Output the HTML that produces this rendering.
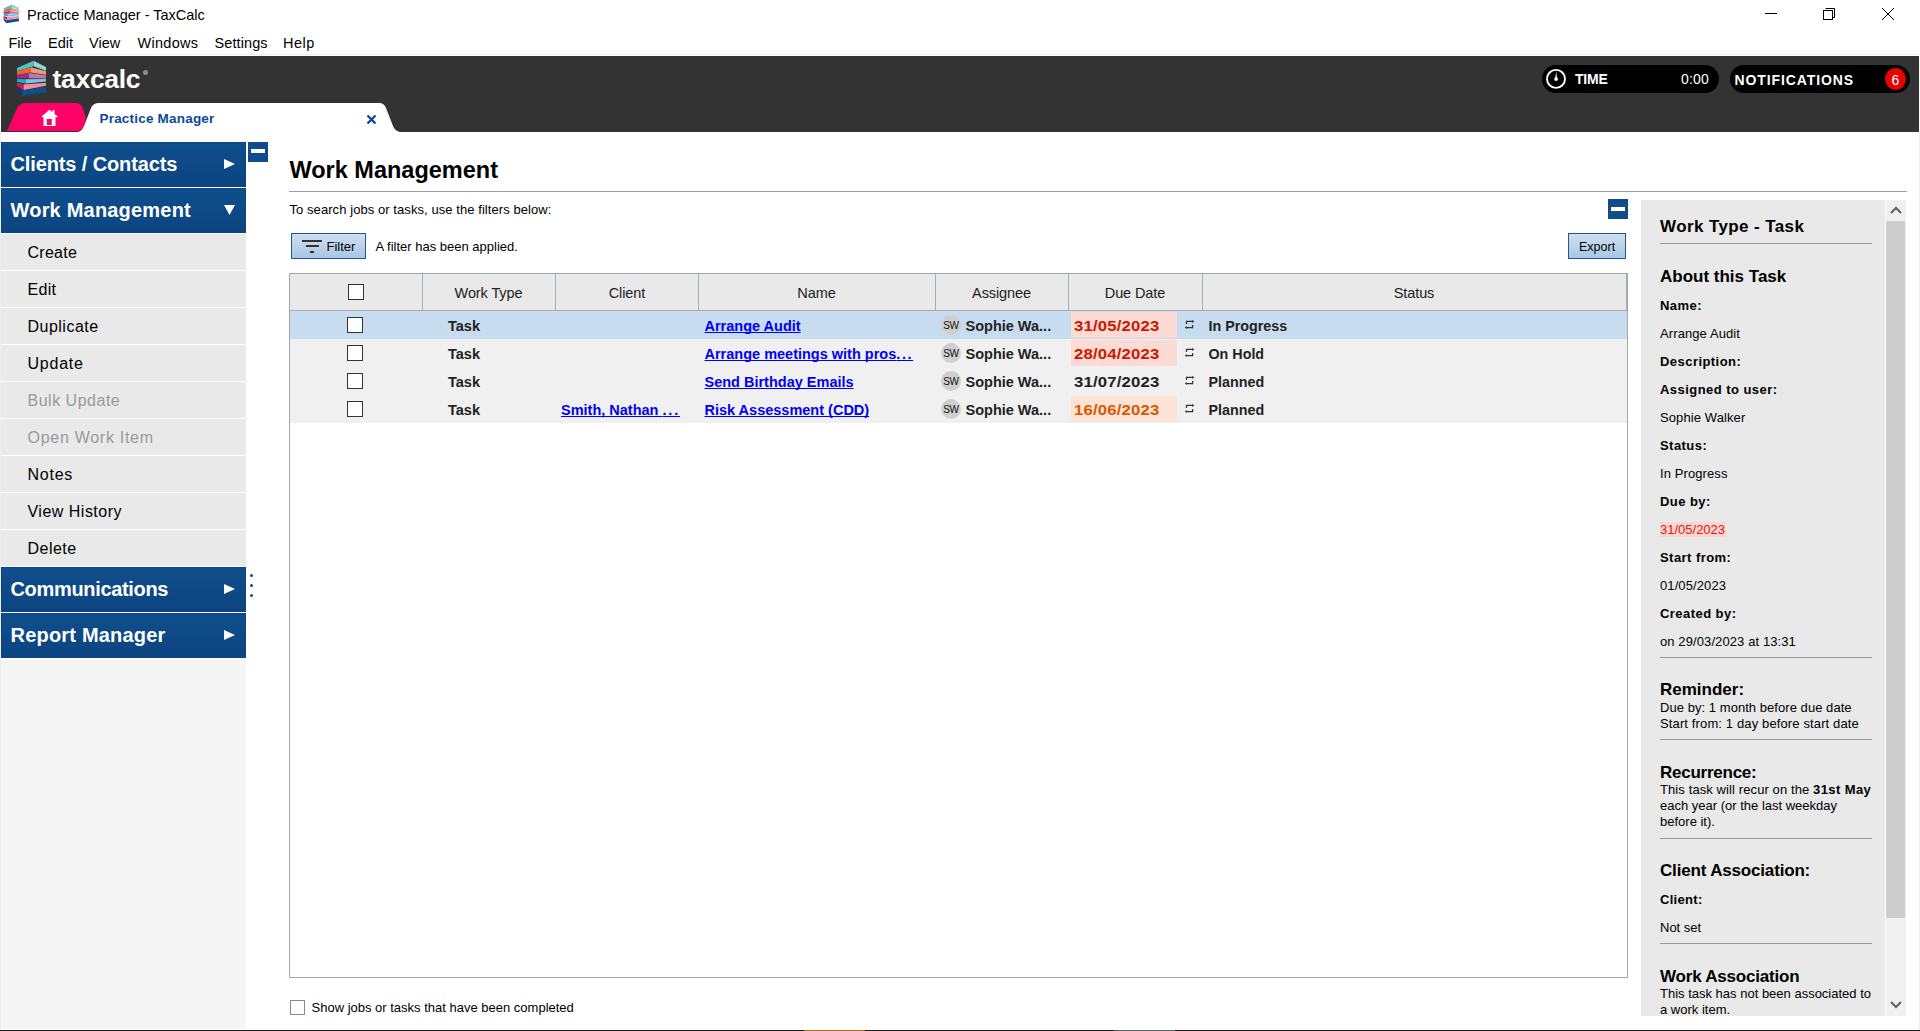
<!DOCTYPE html>
<html><head><meta charset="utf-8"><title>Practice Manager - TaxCalc</title>
<style>
html,body{margin:0;padding:0;width:1920px;height:1031px;overflow:hidden;background:#fff;font-family:"Liberation Sans", sans-serif;}
b{font-weight:700}
</style></head><body>
<div style="position:absolute;left:0px;top:0px;width:1920px;height:1031px;background:#fff"></div>
<svg style="position:absolute;left:2.3px;top:3px" width="19.08" height="21.20" viewBox="0 0 36 40"><polygon points="3,10 19.6,2.7 19.6,8.3 3,13.2" fill="#4cc5be"/><polygon points="19.6,2.7 32,9 32,12.8 19.6,8.3" fill="#8dd8d8"/><polygon points="3,13.5 16.7,9.2 16.7,14.5 3,17" fill="#f0622a"/><polygon points="16.7,9.2 32,13.2 32,16.7 16.7,14.5" fill="#f09a74"/><polygon points="3,17.3 14.8,15 14.8,20.2 3,20.2" fill="#a0288a"/><polygon points="14.8,15 32,17.3 32,20.4 14.8,20.2" fill="#b87ab4"/><polygon points="3,21 11.6,21.2 11.6,25.6 3,23.8" fill="#10b4d8"/><polygon points="11.6,21.2 32,21 32,23.4 11.6,25.6" fill="#78c8e4"/><polygon points="3,24.4 9.7,26.6 9.7,32 3,28.2" fill="#c8205a"/><polygon points="9.7,26.6 32,24.7 32,27.8 9.7,32" fill="#f58aa4"/><polygon points="3,28.4 7.8,32.6 7.8,38 3,31.5" fill="#1a3170"/><polygon points="7.8,32.6 32,29 32,34.5 7.8,38" fill="#0f4e8c"/></svg>
<div style="position:absolute;left:27px;top:7.73px;font-size:14.5px;line-height:14.5px;font-weight:400;color:#000;white-space:pre;">Practice Manager - TaxCalc</div>
<div style="position:absolute;left:1765px;top:13px;width:12px;height:1px;background:#000"></div>
<svg style="position:absolute;left:1820px;top:6px" width="18" height="18"><rect x="3.5" y="4.5" width="9" height="9" fill="none" stroke="#000" stroke-width="1"/><path d="M5.5 2.5 H14.5 V11.5 H12.5" fill="none" stroke="#000" stroke-width="1"/></svg>
<svg style="position:absolute;left:1880px;top:6px" width="16" height="16"><path d="M2 2 L14 14 M14 2 L2 14" stroke="#000" stroke-width="1"/></svg>
<div style="position:absolute;left:8.5px;top:35.53px;font-size:14.5px;line-height:14.5px;font-weight:400;color:#000;white-space:pre;letter-spacing:0px;">File</div>
<div style="position:absolute;left:48px;top:35.53px;font-size:14.5px;line-height:14.5px;font-weight:400;color:#000;white-space:pre;letter-spacing:0px;">Edit</div>
<div style="position:absolute;left:89px;top:35.53px;font-size:14.5px;line-height:14.5px;font-weight:400;color:#000;white-space:pre;letter-spacing:0px;">View</div>
<div style="position:absolute;left:137.5px;top:35.53px;font-size:14.5px;line-height:14.5px;font-weight:400;color:#000;white-space:pre;letter-spacing:0.3px;">Windows</div>
<div style="position:absolute;left:214.5px;top:35.53px;font-size:14.5px;line-height:14.5px;font-weight:400;color:#000;white-space:pre;letter-spacing:0.1px;">Settings</div>
<div style="position:absolute;left:283px;top:35.53px;font-size:14.5px;line-height:14.5px;font-weight:400;color:#000;white-space:pre;letter-spacing:0.5px;">Help</div>
<div style="position:absolute;left:0px;top:54px;width:1920px;height:1px;background:#f0f0f0"></div>
<div style="position:absolute;left:1px;top:56px;width:1918px;height:76px;background:#333333"></div>
<svg style="position:absolute;left:14px;top:58px" width="36.00" height="40.00" viewBox="0 0 36 40"><polygon points="3,10 19.6,2.7 19.6,8.3 3,13.2" fill="#4cc5be"/><polygon points="19.6,2.7 32,9 32,12.8 19.6,8.3" fill="#8dd8d8"/><polygon points="3,13.5 16.7,9.2 16.7,14.5 3,17" fill="#f0622a"/><polygon points="16.7,9.2 32,13.2 32,16.7 16.7,14.5" fill="#f09a74"/><polygon points="3,17.3 14.8,15 14.8,20.2 3,20.2" fill="#a0288a"/><polygon points="14.8,15 32,17.3 32,20.4 14.8,20.2" fill="#b87ab4"/><polygon points="3,21 11.6,21.2 11.6,25.6 3,23.8" fill="#10b4d8"/><polygon points="11.6,21.2 32,21 32,23.4 11.6,25.6" fill="#78c8e4"/><polygon points="3,24.4 9.7,26.6 9.7,32 3,28.2" fill="#c8205a"/><polygon points="9.7,26.6 32,24.7 32,27.8 9.7,32" fill="#f58aa4"/><polygon points="3,28.4 7.8,32.6 7.8,38 3,31.5" fill="#1a3170"/><polygon points="7.8,32.6 32,29 32,34.5 7.8,38" fill="#0f4e8c"/></svg>
<div style="position:absolute;left:52.5px;top:65.57px;font-size:26.5px;line-height:26.5px;font-weight:700;color:#fff;white-space:pre;letter-spacing:-0.3px;">taxcalc</div>
<div style="position:absolute;left:142.8px;top:69.8px;width:5.4px;height:5.4px;background:#8e8e8e;border-radius:50%"></div>
<svg style="position:absolute;left:0;top:100px" width="420" height="32" viewBox="0 100 420 32">
<path d="M7 131 L17 108 Q20 103 26 103 L76 103 Q81 103 83 109 L86 118 L84 126 Q82 131 77 131 Z" fill="#ff0066"/>
<path d="M78 132 Q82 131 84 126 L91 108 Q93 103 99 103 L379 103 Q384 103 386 108 L393 126 Q395 131 400 132 Z" fill="#fff" stroke="#333" stroke-width="0"/>
</svg>
<svg style="position:absolute;left:41px;top:109px" width="18" height="18" viewBox="0 0 18 18">
<path d="M0.5 7.5 L8.5 0.8 L11.5 3.3 L11.5 1 L13.5 1 L13.5 5 L16.8 7.5 L15.2 8.5 L14.5 8 L14.5 17 L2.5 17 L2.5 8 L1.8 8.5 Z" fill="#fff"/>
<rect x="5.8" y="10" width="5" height="6" fill="#ff0066"/>
</svg>
<div style="position:absolute;left:99.5px;top:112.37px;font-size:13.5px;line-height:13.5px;font-weight:700;color:#0b4a94;white-space:pre;letter-spacing:0.2px;">Practice Manager</div>
<svg style="position:absolute;left:366px;top:114px" width="11" height="11"><path d="M1.5 1.5 L9.5 9.5 M9.5 1.5 L1.5 9.5" stroke="#0b4a8c" stroke-width="2.4"/></svg>
<div style="position:absolute;left:1542px;top:65px;width:177px;height:28px;background:#000;border-radius:14px"></div>
<svg style="position:absolute;left:1545px;top:68px" width="22" height="22"><circle cx="11" cy="10.9" r="9.0" fill="none" stroke="#fff" stroke-width="1.9"/><path d="M11.2 3.3 L12.1 11 L10.1 11 Z" fill="#fff"/><circle cx="11.1" cy="11.1" r="1.9" fill="#fff"/></svg>
<div style="position:absolute;left:1575px;top:72.15px;font-size:14px;line-height:14px;font-weight:700;color:#fff;white-space:pre;letter-spacing:-0.2px;">TIME</div>
<div style="position:absolute;left:1681px;top:71.65px;font-size:14px;line-height:14px;font-weight:400;color:#fff;white-space:pre;letter-spacing:0.2px;">0:00</div>
<div style="position:absolute;left:1730px;top:65px;width:180px;height:28px;background:#000;border-radius:14px"></div>
<div style="position:absolute;left:1734.5px;top:73.15px;font-size:14px;line-height:14px;font-weight:700;color:#fff;white-space:pre;letter-spacing:0.9px;">NOTIFICATIONS</div>
<div style="position:absolute;left:1885px;top:68px;width:21px;height:22px;background:#e60000;border-radius:50%"></div>
<div style="position:absolute;left:1891.5px;top:73.15px;font-size:14px;line-height:14px;font-weight:400;color:#fff;white-space:pre;">6</div>
<div style="position:absolute;left:0px;top:659px;width:246px;height:370px;background:#f5f5f5"></div>
<div style="position:absolute;left:0px;top:132px;width:1px;height:899px;background:#eeeeee"></div>
<div style="position:absolute;left:1px;top:142px;width:245px;height:45px;background:linear-gradient(#0f4f8d,#0c4480);box-shadow:inset 0 0 0 1px #0c4580, inset 0 -1px 0 #093a6e"></div>
<div style="position:absolute;left:10.5px;top:154.07px;font-size:20px;line-height:20px;font-weight:700;color:#fff;white-space:pre;letter-spacing:-0.12px;">Clients / Contacts</div>
<svg style="position:absolute;left:224px;top:159px" width="12" height="12"><path d="M0 0 L11 5 L0 10 Z" fill="#fff"/></svg>
<div style="position:absolute;left:1px;top:188px;width:245px;height:45px;background:linear-gradient(#0f4f8d,#0c4480);box-shadow:inset 0 0 0 1px #0c4580, inset 0 -1px 0 #093a6e"></div>
<div style="position:absolute;left:10.5px;top:200.07px;font-size:20px;line-height:20px;font-weight:700;color:#fff;white-space:pre;letter-spacing:0.2px;">Work Management</div>
<svg style="position:absolute;left:224px;top:205px" width="12" height="12"><path d="M0 0 L11 0 L5.5 10 Z" fill="#fff"/></svg>
<div style="position:absolute;left:1px;top:234px;width:245px;height:36px;background:#e9e9e9"></div>
<div style="position:absolute;left:27.5px;top:244.96px;font-size:16px;line-height:16px;font-weight:400;color:#000;white-space:pre;letter-spacing:0.27px;">Create</div>
<div style="position:absolute;left:1px;top:271px;width:245px;height:36px;background:#e9e9e9"></div>
<div style="position:absolute;left:27.5px;top:281.96px;font-size:16px;line-height:16px;font-weight:400;color:#000;white-space:pre;letter-spacing:0.3px;">Edit</div>
<div style="position:absolute;left:1px;top:308px;width:245px;height:36px;background:#e9e9e9"></div>
<div style="position:absolute;left:27.5px;top:318.96px;font-size:16px;line-height:16px;font-weight:400;color:#000;white-space:pre;letter-spacing:0.49px;">Duplicate</div>
<div style="position:absolute;left:1px;top:345px;width:245px;height:36px;background:#e9e9e9"></div>
<div style="position:absolute;left:27.5px;top:355.96px;font-size:16px;line-height:16px;font-weight:400;color:#000;white-space:pre;letter-spacing:0.76px;">Update</div>
<div style="position:absolute;left:1px;top:382px;width:245px;height:36px;background:#e9e9e9"></div>
<div style="position:absolute;left:27.5px;top:392.96px;font-size:16px;line-height:16px;font-weight:400;color:#9a9a9a;white-space:pre;letter-spacing:0.51px;">Bulk Update</div>
<div style="position:absolute;left:1px;top:419px;width:245px;height:36px;background:#e9e9e9"></div>
<div style="position:absolute;left:27.5px;top:429.96px;font-size:16px;line-height:16px;font-weight:400;color:#9a9a9a;white-space:pre;letter-spacing:0.72px;">Open Work Item</div>
<div style="position:absolute;left:1px;top:456px;width:245px;height:36px;background:#e9e9e9"></div>
<div style="position:absolute;left:27.5px;top:466.96px;font-size:16px;line-height:16px;font-weight:400;color:#000;white-space:pre;letter-spacing:0.75px;">Notes</div>
<div style="position:absolute;left:1px;top:493px;width:245px;height:36px;background:#e9e9e9"></div>
<div style="position:absolute;left:27.5px;top:503.96px;font-size:16px;line-height:16px;font-weight:400;color:#000;white-space:pre;letter-spacing:0.49px;">View History</div>
<div style="position:absolute;left:1px;top:530px;width:245px;height:36px;background:#e9e9e9"></div>
<div style="position:absolute;left:27.5px;top:540.96px;font-size:16px;line-height:16px;font-weight:400;color:#000;white-space:pre;letter-spacing:0.47px;">Delete</div>
<div style="position:absolute;left:1px;top:567px;width:245px;height:45px;background:linear-gradient(#0f4f8d,#0c4480);box-shadow:inset 0 0 0 1px #0c4580, inset 0 -1px 0 #093a6e"></div>
<div style="position:absolute;left:10.5px;top:579.07px;font-size:20px;line-height:20px;font-weight:700;color:#fff;white-space:pre;letter-spacing:-0.33px;">Communications</div>
<svg style="position:absolute;left:224px;top:584px" width="12" height="12"><path d="M0 0 L11 5 L0 10 Z" fill="#fff"/></svg>
<div style="position:absolute;left:1px;top:613px;width:245px;height:45px;background:linear-gradient(#0f4f8d,#0c4480);box-shadow:inset 0 0 0 1px #0c4580, inset 0 -1px 0 #093a6e"></div>
<div style="position:absolute;left:10.5px;top:625.07px;font-size:20px;line-height:20px;font-weight:700;color:#fff;white-space:pre;letter-spacing:0.2px;">Report Manager</div>
<svg style="position:absolute;left:224px;top:630px" width="12" height="12"><path d="M0 0 L11 5 L0 10 Z" fill="#fff"/></svg>
<div style="position:absolute;left:248px;top:142px;width:20px;height:20px;background:#0e4c8a"></div>
<div style="position:absolute;left:251px;top:149px;width:14px;height:4px;background:#fff"></div>
<div style="position:absolute;left:250px;top:574px;width:3px;height:3px;background:#0e4c8a;border-radius:50%"></div>
<div style="position:absolute;left:250px;top:584px;width:3px;height:3px;background:#0e4c8a;border-radius:50%"></div>
<div style="position:absolute;left:250px;top:594px;width:3px;height:3px;background:#0e4c8a;border-radius:50%"></div>
<div style="position:absolute;left:289.5px;top:159.11px;font-size:23.5px;line-height:23.5px;font-weight:700;color:#000;white-space:pre;">Work Management</div>
<div style="position:absolute;left:289px;top:191px;width:1618px;height:1px;background:#a0a0a0"></div>
<div style="position:absolute;left:289.5px;top:202.80px;font-size:13px;line-height:13px;font-weight:400;color:#000;white-space:pre;letter-spacing:0.07px;">To search jobs or tasks, use the filters below:</div>
<div style="position:absolute;left:1608px;top:199px;width:20px;height:20px;background:#0e4c8a"></div>
<div style="position:absolute;left:1611px;top:207px;width:14px;height:4px;background:#fff"></div>
<div style="position:absolute;left:291px;top:233px;width:75px;height:26px;background:linear-gradient(#cfe0f1,#a9c6e2);border:1px solid #1d5796;box-sizing:border-box"></div>
<div style="position:absolute;left:302px;top:240px;width:20px;height:2px;background:#333"></div>
<div style="position:absolute;left:306px;top:245px;width:13px;height:2px;background:#333"></div>
<div style="position:absolute;left:310px;top:251px;width:4px;height:2px;background:#333"></div>
<div style="position:absolute;left:326.5px;top:239.60px;font-size:13px;line-height:13px;font-weight:400;color:#000;white-space:pre;">Filter</div>
<div style="position:absolute;left:375.5px;top:239.60px;font-size:13px;line-height:13px;font-weight:400;color:#000;white-space:pre;">A filter has been applied.</div>
<div style="position:absolute;left:1568px;top:233px;width:58px;height:26px;background:linear-gradient(#cfe0f1,#a9c6e2);border:1px solid #1d5796;box-sizing:border-box"></div>
<div style="position:absolute;left:1579px;top:240.72px;font-size:12.5px;line-height:12.5px;font-weight:400;color:#000;white-space:pre;">Export</div>
<div style="position:absolute;left:289px;top:273px;width:1339px;height:705px;background:#fff;border:1px solid #9ea8b0;box-sizing:border-box"></div>
<div style="position:absolute;left:290px;top:274px;width:1337px;height:36px;background:#e9e9e9"></div>
<div style="position:absolute;left:290px;top:310px;width:1337px;height:1px;background:#a5adb5"></div>
<div style="position:absolute;left:422px;top:274px;width:1px;height:36px;background:#a5adb5"></div>
<div style="position:absolute;left:555px;top:274px;width:1px;height:36px;background:#a5adb5"></div>
<div style="position:absolute;left:698px;top:274px;width:1px;height:36px;background:#a5adb5"></div>
<div style="position:absolute;left:935px;top:274px;width:1px;height:36px;background:#a5adb5"></div>
<div style="position:absolute;left:1068px;top:274px;width:1px;height:36px;background:#a5adb5"></div>
<div style="position:absolute;left:1202px;top:274px;width:1px;height:36px;background:#a5adb5"></div>
<div style="position:absolute;left:1626px;top:274px;width:1px;height:36px;background:#a5adb5"></div>
<div style="position:absolute;left:348px;top:284px;width:16px;height:16px;background:#fff;border:1.6px solid #333;box-sizing:border-box"></div>
<div style="position:absolute;left:188.5px;width:600px;text-align:center;top:285.73px;font-size:14.5px;line-height:14.5px;font-weight:400;color:#222;white-space:pre;letter-spacing:-0.1px;">Work Type</div>
<div style="position:absolute;left:327px;width:600px;text-align:center;top:285.73px;font-size:14.5px;line-height:14.5px;font-weight:400;color:#222;white-space:pre;letter-spacing:-0.1px;">Client</div>
<div style="position:absolute;left:516.5px;width:600px;text-align:center;top:285.73px;font-size:14.5px;line-height:14.5px;font-weight:400;color:#222;white-space:pre;letter-spacing:-0.1px;">Name</div>
<div style="position:absolute;left:701.5px;width:600px;text-align:center;top:285.73px;font-size:14.5px;line-height:14.5px;font-weight:400;color:#222;white-space:pre;letter-spacing:-0.1px;">Assignee</div>
<div style="position:absolute;left:835px;width:600px;text-align:center;top:285.73px;font-size:14.5px;line-height:14.5px;font-weight:400;color:#222;white-space:pre;letter-spacing:-0.1px;">Due Date</div>
<div style="position:absolute;left:1114px;width:600px;text-align:center;top:285.73px;font-size:14.5px;line-height:14.5px;font-weight:400;color:#222;white-space:pre;letter-spacing:-0.1px;">Status</div>
<div style="position:absolute;left:290px;top:311px;width:1337px;height:28px;background:#c7dcee"></div>
<div style="position:absolute;left:347px;top:317px;width:16px;height:16px;background:#fff;border:1.6px solid #333;box-sizing:border-box"></div>
<div style="position:absolute;left:448px;top:318.73px;font-size:14.5px;line-height:14.5px;font-weight:700;color:#222;white-space:pre;">Task</div>
<div style="position:absolute;left:704.5px;top:318.73px;font-size:14.5px;line-height:14.5px;font-weight:700;color:#0000f5;white-space:pre;text-decoration:underline;text-decoration-skip-ink:none">Arrange Audit</div>
<div style="position:absolute;left:941px;top:315px;width:20px;height:20px;background:#cfcfcf;border-radius:50%"></div>
<div style="position:absolute;left:650.8px;width:600px;text-align:center;top:321.24px;font-size:10px;line-height:10px;font-weight:400;color:#111;white-space:pre;letter-spacing:-0.6px;">SW</div>
<div style="position:absolute;left:965.5px;top:318.73px;font-size:14.5px;line-height:14.5px;font-weight:700;color:#222;white-space:pre;">Sophie Wa...</div>
<div style="position:absolute;left:1071px;top:312px;width:106px;height:26px;background:#fddbd5"></div>
<div style="position:absolute;left:1074px;top:318.30px;font-size:15px;line-height:15px;font-weight:700;color:#cc1800;white-space:pre;letter-spacing:0.15px;transform:scaleX(1.115);transform-origin:0 0">31/05/2023</div>
<svg style="position:absolute;left:1180px;top:316px" width="20" height="18" viewBox="0 0 20 18"><path d="M6.5 8 V5.4 H12.6 M12.6 9 V11.5 H6.4" stroke="#333" stroke-width="1.25" fill="none"/><polygon points="12.2,3.8 14.3,5.4 12.2,7" fill="#333"/><polygon points="6.8,9.9 4.8,11.5 6.8,13.1" fill="#333"/></svg>
<div style="position:absolute;left:1208.5px;top:318.90px;font-size:14.3px;line-height:14.3px;font-weight:700;color:#222;white-space:pre;">In Progress</div>
<div style="position:absolute;left:290px;top:339px;width:1337px;height:28px;background:#f0f0f0"></div>
<div style="position:absolute;left:347px;top:345px;width:16px;height:16px;background:#fff;border:1.6px solid #333;box-sizing:border-box"></div>
<div style="position:absolute;left:448px;top:346.73px;font-size:14.5px;line-height:14.5px;font-weight:700;color:#222;white-space:pre;">Task</div>
<div style="position:absolute;left:704.5px;top:346.73px;font-size:14.5px;line-height:14.5px;font-weight:700;color:#0000f5;white-space:pre;text-decoration:underline;text-decoration-skip-ink:none">Arrange meetings with pros<span style="letter-spacing:1.6px">...</span></div>
<div style="position:absolute;left:941px;top:343px;width:20px;height:20px;background:#cfcfcf;border-radius:50%"></div>
<div style="position:absolute;left:650.8px;width:600px;text-align:center;top:349.24px;font-size:10px;line-height:10px;font-weight:400;color:#111;white-space:pre;letter-spacing:-0.6px;">SW</div>
<div style="position:absolute;left:965.5px;top:346.73px;font-size:14.5px;line-height:14.5px;font-weight:700;color:#222;white-space:pre;">Sophie Wa...</div>
<div style="position:absolute;left:1071px;top:340px;width:106px;height:26px;background:#fddbd5"></div>
<div style="position:absolute;left:1074px;top:346.30px;font-size:15px;line-height:15px;font-weight:700;color:#cc1800;white-space:pre;letter-spacing:0.15px;transform:scaleX(1.115);transform-origin:0 0">28/04/2023</div>
<svg style="position:absolute;left:1180px;top:344px" width="20" height="18" viewBox="0 0 20 18"><path d="M6.5 8 V5.4 H12.6 M12.6 9 V11.5 H6.4" stroke="#333" stroke-width="1.25" fill="none"/><polygon points="12.2,3.8 14.3,5.4 12.2,7" fill="#333"/><polygon points="6.8,9.9 4.8,11.5 6.8,13.1" fill="#333"/></svg>
<div style="position:absolute;left:1208.5px;top:346.90px;font-size:14.3px;line-height:14.3px;font-weight:700;color:#222;white-space:pre;">On Hold</div>
<div style="position:absolute;left:290px;top:367px;width:1337px;height:28px;background:#f0f0f0"></div>
<div style="position:absolute;left:347px;top:373px;width:16px;height:16px;background:#fff;border:1.6px solid #333;box-sizing:border-box"></div>
<div style="position:absolute;left:448px;top:374.73px;font-size:14.5px;line-height:14.5px;font-weight:700;color:#222;white-space:pre;">Task</div>
<div style="position:absolute;left:704.5px;top:374.73px;font-size:14.5px;line-height:14.5px;font-weight:700;color:#0000f5;white-space:pre;text-decoration:underline;text-decoration-skip-ink:none">Send Birthday Emails</div>
<div style="position:absolute;left:941px;top:371px;width:20px;height:20px;background:#cfcfcf;border-radius:50%"></div>
<div style="position:absolute;left:650.8px;width:600px;text-align:center;top:377.24px;font-size:10px;line-height:10px;font-weight:400;color:#111;white-space:pre;letter-spacing:-0.6px;">SW</div>
<div style="position:absolute;left:965.5px;top:374.73px;font-size:14.5px;line-height:14.5px;font-weight:700;color:#222;white-space:pre;">Sophie Wa...</div>
<div style="position:absolute;left:1074px;top:374.30px;font-size:15px;line-height:15px;font-weight:700;color:#222;white-space:pre;letter-spacing:0.15px;transform:scaleX(1.115);transform-origin:0 0">31/07/2023</div>
<svg style="position:absolute;left:1180px;top:372px" width="20" height="18" viewBox="0 0 20 18"><path d="M6.5 8 V5.4 H12.6 M12.6 9 V11.5 H6.4" stroke="#333" stroke-width="1.25" fill="none"/><polygon points="12.2,3.8 14.3,5.4 12.2,7" fill="#333"/><polygon points="6.8,9.9 4.8,11.5 6.8,13.1" fill="#333"/></svg>
<div style="position:absolute;left:1208.5px;top:374.90px;font-size:14.3px;line-height:14.3px;font-weight:700;color:#222;white-space:pre;">Planned</div>
<div style="position:absolute;left:290px;top:395px;width:1337px;height:28px;background:#f0f0f0"></div>
<div style="position:absolute;left:347px;top:401px;width:16px;height:16px;background:#fff;border:1.6px solid #333;box-sizing:border-box"></div>
<div style="position:absolute;left:448px;top:402.73px;font-size:14.5px;line-height:14.5px;font-weight:700;color:#222;white-space:pre;">Task</div>
<div style="position:absolute;left:561px;top:402.73px;font-size:14.5px;line-height:14.5px;font-weight:700;color:#0000f5;white-space:pre;text-decoration:underline;text-decoration-skip-ink:none">Smith, Nathan <span style="letter-spacing:1.8px">...</span></div>
<div style="position:absolute;left:704.5px;top:402.73px;font-size:14.5px;line-height:14.5px;font-weight:700;color:#0000f5;white-space:pre;text-decoration:underline;text-decoration-skip-ink:none">Risk Assessment (CDD)</div>
<div style="position:absolute;left:941px;top:399px;width:20px;height:20px;background:#cfcfcf;border-radius:50%"></div>
<div style="position:absolute;left:650.8px;width:600px;text-align:center;top:405.24px;font-size:10px;line-height:10px;font-weight:400;color:#111;white-space:pre;letter-spacing:-0.6px;">SW</div>
<div style="position:absolute;left:965.5px;top:402.73px;font-size:14.5px;line-height:14.5px;font-weight:700;color:#222;white-space:pre;">Sophie Wa...</div>
<div style="position:absolute;left:1071px;top:396px;width:106px;height:26px;background:#fde3d5"></div>
<div style="position:absolute;left:1074px;top:402.30px;font-size:15px;line-height:15px;font-weight:700;color:#d65a00;white-space:pre;letter-spacing:0.15px;transform:scaleX(1.115);transform-origin:0 0">16/06/2023</div>
<svg style="position:absolute;left:1180px;top:400px" width="20" height="18" viewBox="0 0 20 18"><path d="M6.5 8 V5.4 H12.6 M12.6 9 V11.5 H6.4" stroke="#333" stroke-width="1.25" fill="none"/><polygon points="12.2,3.8 14.3,5.4 12.2,7" fill="#333"/><polygon points="6.8,9.9 4.8,11.5 6.8,13.1" fill="#333"/></svg>
<div style="position:absolute;left:1208.5px;top:402.90px;font-size:14.3px;line-height:14.3px;font-weight:700;color:#222;white-space:pre;">Planned</div>
<div style="position:absolute;left:290px;top:1000px;width:15px;height:15px;background:#fff;border:1px solid #8a8a8a;box-sizing:border-box"></div>
<div style="position:absolute;left:311.5px;top:1001.00px;font-size:13px;line-height:13px;font-weight:400;color:#000;white-space:pre;">Show jobs or tasks that have been completed</div>
<div style="position:absolute;left:1641px;top:200px;width:244px;height:816px;background:#e9e9e9"></div>
<div style="position:absolute;left:1886px;top:200px;width:20px;height:816px;background:#f0f0f0"></div>
<div style="position:absolute;left:1886px;top:221px;width:19px;height:697px;background:#cdcdcd"></div>
<svg style="position:absolute;left:1889px;top:204px" width="14" height="12"><path d="M2 9 L7 4 L12 9" stroke="#606060" stroke-width="2" fill="none"/></svg>
<svg style="position:absolute;left:1889px;top:999px" width="14" height="12"><path d="M2 3 L7 8 L12 3" stroke="#606060" stroke-width="2" fill="none"/></svg>
<div style="position:absolute;left:1660px;top:218.21px;font-size:17px;line-height:17px;font-weight:700;color:#000;white-space:pre;letter-spacing:0.4px;">Work Type - Task</div>
<div style="position:absolute;left:1660px;top:243px;width:212px;height:1px;background:#999"></div>
<div style="position:absolute;left:1660px;top:267.61px;font-size:17px;line-height:17px;font-weight:700;color:#000;white-space:pre;">About this Task</div>
<div style="position:absolute;left:1660px;top:299.30px;font-size:13px;line-height:13px;font-weight:700;color:#000;white-space:pre;letter-spacing:0.45px;">Name:</div>
<div style="position:absolute;left:1660px;top:327.00px;font-size:13px;line-height:13px;font-weight:400;color:#000;white-space:pre;letter-spacing:0.1px;">Arrange Audit</div>
<div style="position:absolute;left:1660px;top:355.20px;font-size:13px;line-height:13px;font-weight:700;color:#000;white-space:pre;letter-spacing:0.45px;">Description:</div>
<div style="position:absolute;left:1660px;top:383.00px;font-size:13px;line-height:13px;font-weight:700;color:#000;white-space:pre;letter-spacing:0.45px;">Assigned to user:</div>
<div style="position:absolute;left:1660px;top:411.00px;font-size:13px;line-height:13px;font-weight:400;color:#000;white-space:pre;letter-spacing:0.1px;">Sophie Walker</div>
<div style="position:absolute;left:1660px;top:439.00px;font-size:13px;line-height:13px;font-weight:700;color:#000;white-space:pre;letter-spacing:0.45px;">Status:</div>
<div style="position:absolute;left:1660px;top:467.00px;font-size:13px;line-height:13px;font-weight:400;color:#000;white-space:pre;letter-spacing:0.1px;">In Progress</div>
<div style="position:absolute;left:1660px;top:495.20px;font-size:13px;line-height:13px;font-weight:700;color:#000;white-space:pre;letter-spacing:0.45px;">Due by:</div>
<div style="position:absolute;left:1660px;top:522px;width:66px;height:15px;background:#fdd5cf"></div>
<div style="position:absolute;left:1660px;top:523.00px;font-size:13px;line-height:13px;font-weight:400;color:#d0201a;white-space:pre;">31/05/2023</div>
<div style="position:absolute;left:1660px;top:551.00px;font-size:13px;line-height:13px;font-weight:700;color:#000;white-space:pre;letter-spacing:0.45px;">Start from:</div>
<div style="position:absolute;left:1660px;top:579.00px;font-size:13px;line-height:13px;font-weight:400;color:#000;white-space:pre;letter-spacing:0.1px;">01/05/2023</div>
<div style="position:absolute;left:1660px;top:607.20px;font-size:13px;line-height:13px;font-weight:700;color:#000;white-space:pre;letter-spacing:0.45px;">Created by:</div>
<div style="position:absolute;left:1660px;top:635.00px;font-size:13px;line-height:13px;font-weight:400;color:#000;white-space:pre;letter-spacing:0.1px;">on 29/03/2023 at 13:31</div>
<div style="position:absolute;left:1660px;top:657px;width:212px;height:1px;background:#999"></div>
<div style="position:absolute;left:1660px;top:681.11px;font-size:17px;line-height:17px;font-weight:700;color:#000;white-space:pre;">Reminder:</div>
<div style="position:absolute;left:1660px;top:701.00px;font-size:13px;line-height:13px;font-weight:400;color:#000;white-space:pre;letter-spacing:0.05px;">Due by: 1 month before due date</div>
<div style="position:absolute;left:1660px;top:717.00px;font-size:13px;line-height:13px;font-weight:400;color:#000;white-space:pre;letter-spacing:0.13px;">Start from: 1 day before start date</div>
<div style="position:absolute;left:1660px;top:739px;width:212px;height:1px;background:#999"></div>
<div style="position:absolute;left:1660px;top:763.61px;font-size:17px;line-height:17px;font-weight:700;color:#000;white-space:pre;letter-spacing:-0.25px;">Recurrence:</div>
<div style="position:absolute;left:1660px;top:783.20px;font-size:13px;line-height:13px;font-weight:400;color:#000;white-space:pre;letter-spacing:0.1px;">This task will recur on the <b style="letter-spacing:0.4px">31st May</b></div>
<div style="position:absolute;left:1660px;top:799.00px;font-size:13px;line-height:13px;font-weight:400;color:#000;white-space:pre;">each year (or the last weekday</div>
<div style="position:absolute;left:1660px;top:815.00px;font-size:13px;line-height:13px;font-weight:400;color:#000;white-space:pre;">before it).</div>
<div style="position:absolute;left:1660px;top:838px;width:212px;height:1px;background:#999"></div>
<div style="position:absolute;left:1660px;top:861.61px;font-size:17px;line-height:17px;font-weight:700;color:#000;white-space:pre;letter-spacing:-0.17px;">Client Association:</div>
<div style="position:absolute;left:1660px;top:893.00px;font-size:13px;line-height:13px;font-weight:700;color:#000;white-space:pre;letter-spacing:0.3px;">Client:</div>
<div style="position:absolute;left:1660px;top:921.20px;font-size:13px;line-height:13px;font-weight:400;color:#000;white-space:pre;">Not set</div>
<div style="position:absolute;left:1660px;top:943px;width:212px;height:1px;background:#999"></div>
<div style="position:absolute;left:1660px;top:967.81px;font-size:17px;line-height:17px;font-weight:700;color:#000;white-space:pre;letter-spacing:-0.2px;">Work Association</div>
<div style="position:absolute;left:1660px;top:987.00px;font-size:13px;line-height:13px;font-weight:400;color:#000;white-space:pre;letter-spacing:0.0px;">This task has not been associated to</div>
<div style="position:absolute;left:1660px;top:1003.00px;font-size:13px;line-height:13px;font-weight:400;color:#000;white-space:pre;">a work item.</div>
<div style="position:absolute;left:1641px;top:1016px;width:279px;height:14px;background:#fff"></div>
<div style="position:absolute;left:1919px;top:132px;width:1px;height:899px;background:#ececec"></div>
<div style="position:absolute;left:0px;top:1030px;width:1920px;height:1px;background:#1c1c1c"></div>
<div style="position:absolute;left:804px;top:1030px;width:61px;height:1px;background:#b5651d"></div>
<div style="position:absolute;left:1114px;top:1030px;width:61px;height:1px;background:#5a5f66"></div>
</body></html>
